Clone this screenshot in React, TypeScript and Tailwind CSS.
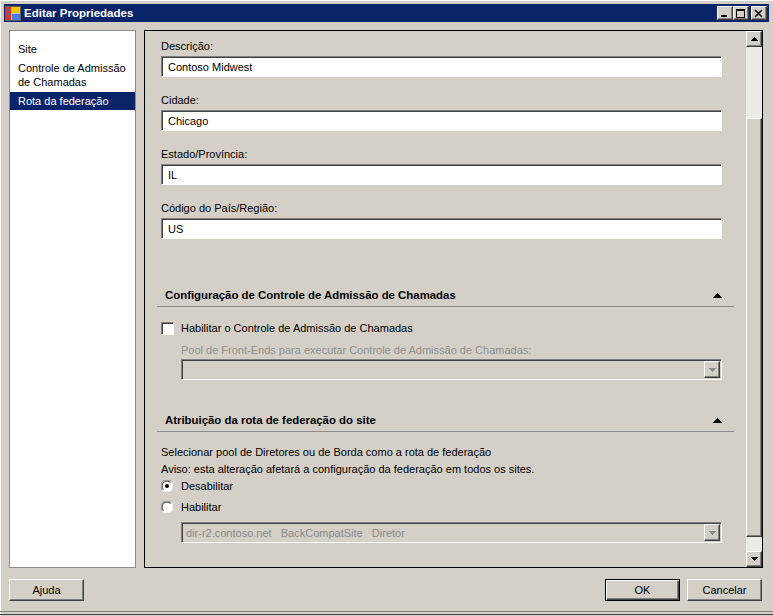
import React from "react";

const raised =
  "border border-t-white border-l-white border-b-[#404040] border-r-[#404040] shadow-[inset_-1px_-1px_0_#808080] bg-[#d4d0c8]";
const sunken =
  "border border-t-[#808080] border-l-[#808080] border-b-white border-r-white shadow-[inset_1px_1px_0_#404040]";

function Tri({ up = true, color = "#000" }: { up?: boolean; color?: string }) {
  const rows = [1, 3, 5, 7, 9];
  return (
    <svg width="9" height="5" shapeRendering="crispEdges">
      {rows.map((w, i) => (
        <rect key={i} x={(9 - w) / 2} y={up ? i : 4 - i} width={w} height="1" fill={color} />
      ))}
    </svg>
  );
}

function SmallTri({ up = true, color = "#000" }: { up?: boolean; color?: string }) {
  const rows = [1, 3, 5, 7];
  return (
    <svg width="7" height="4" shapeRendering="crispEdges">
      {rows.map((w, i) => (
        <rect key={i} x={(7 - w) / 2} y={up ? i : 3 - i} width={w} height="1" fill={color} />
      ))}
    </svg>
  );
}

function AppIcon() {
  return (
    <svg width="16" height="16" shapeRendering="crispEdges">
      <rect x="0.5" y="1.5" width="15" height="14" fill="#c0c0c0" stroke="#606060" />
      <rect x="1" y="2" width="5" height="13" fill="#d83a2a" />
      <rect x="2" y="4" width="3" height="2" fill="#3a6fd8" />
      <rect x="2" y="8" width="3" height="2" fill="#3a6fd8" />
      <rect x="7" y="2" width="8" height="6" fill="#f5c400" />
      <rect x="7" y="9" width="8" height="6" fill="#4a7fe0" />
    </svg>
  );
}

function TitleButton({ kind }: { kind: "min" | "max" | "close" }) {
  return (
    <div className={`w-[16px] h-[14px] flex items-center justify-center ${raised}`}>
      <svg width="10" height="9" shapeRendering="crispEdges">
        {kind === "min" && <rect x="1" y="6" width="6" height="2" fill="#000" />}
        {kind === "max" && (
          <g fill="#000">
            <rect x="0" y="0" width="9" height="2" />
            <rect x="0" y="0" width="1" height="9" />
            <rect x="8" y="0" width="1" height="9" />
            <rect x="0" y="8" width="9" height="1" />
          </g>
        )}
        {kind === "close" && (
          <path d="M1 1 L8 8 M8 1 L1 8" stroke="#000" strokeWidth="1.6" shapeRendering="auto" />
        )}
      </svg>
    </div>
  );
}

function Field({ label, value }: { label: string; value: string }) {
  return (
    <div className="flex flex-col">
      <div className="h-[14px] leading-[14px] mb-[3px]">{label}</div>
      <div className={`h-[21px] bg-white flex items-center pl-[6px] ${sunken}`}>{value}</div>
    </div>
  );
}

function SectionHeader({ title }: { title: string }) {
  return (
    <div className="ml-[-4px] mr-[-12px] pl-[8px] pr-[12px] pb-[3px] border-b border-[#8c8c8c] flex items-center justify-between">
      <div className="h-[16px] leading-[16px] font-bold text-[11.4px]">{title}</div>
      <Tri />
    </div>
  );
}

function DisabledCombo({ value }: { value?: string }) {
  return (
    <div className={`h-[21px] flex items-center justify-between bg-[#d4d0c8] ${sunken}`}>
      <span className="pl-[4px] text-[#8a8a8a] whitespace-pre">{value}</span>
      <div className={`w-[16px] h-[17px] mr-[1px] flex items-center justify-center ${raised}`}>
        <SmallTri up={false} color="#8a8a8a" />
      </div>
    </div>
  );
}

function Radio({ checked }: { checked?: boolean }) {
  return (
    <svg width="12" height="12">
      <circle cx="6" cy="6" r="5.5" fill="white" />
      <path d="M1.6 10.4 A5.5 5.5 0 0 1 10.4 1.6" stroke="#808080" strokeWidth="1" fill="none" />
      <path d="M2.5 9.5 A4.5 4.5 0 0 1 9.5 2.5" stroke="#404040" strokeWidth="1" fill="none" />
      <path d="M10.4 1.6 A5.5 5.5 0 0 1 1.6 10.4" stroke="#ffffff" strokeWidth="1" fill="none" />
      {checked && <circle cx="6" cy="6" r="2" fill="#000" />}
    </svg>
  );
}

function Button({ label, primary }: { label: string; primary?: boolean }) {
  return (
    <div
      className={`w-[75px] h-[22px] flex items-center justify-center bg-[#d4d0c8] ${
        primary
          ? "border border-black shadow-[inset_1px_1px_0_#fff,inset_-1px_-1px_0_#404040,inset_-2px_-2px_0_#808080]"
          : raised
      }`}
    >
      {label}
    </div>
  );
}

export default function App() {
  return (
    <div className="w-[773px] h-[616px] bg-[#d4d0c8] flex flex-col font-['Liberation_Sans',Arial,sans-serif] text-[11px] leading-[14px] text-black overflow-hidden shadow-[inset_1px_1px_0_#fff]">
      {/* title bar */}
      <div className="mt-[4px] mx-[4px] h-[18px] bg-[#0a246a] flex items-center pl-[1px] pr-[2px]">
        <AppIcon />
        <span className="ml-[3px] text-white font-bold text-[11.5px]">Editar Propriedades</span>
        <div className="ml-auto flex items-center">
          <TitleButton kind="min" />
          <TitleButton kind="max" />
          <div className="w-[2px]" />
          <TitleButton kind="close" />
        </div>
      </div>

      {/* body */}
      <div className="mt-[8px] ml-[9px] flex gap-[8px] h-[538px]">
        <div className="w-[127px] bg-white border border-[#8c8c8c] pt-[9px]">
          <div className="h-[18px] flex items-center pl-[8px]">Site</div>
          <div className="pl-[8px] py-[3px] leading-[14px]">
            Controle de Admissão
            <br />
            de Chamadas
          </div>
          <div className="h-[18px] flex items-center pl-[8px] bg-[#0a246a] text-white">Rota da federação</div>
        </div>

        <div className="w-[619px] border border-black flex">
          <div className="flex-1 pl-[16px] pr-[24px] pt-[8px] flex flex-col">
            <div className="flex flex-col gap-[16px]">
              <Field label="Descrição:" value="Contoso Midwest" />
              <Field label="Cidade:" value="Chicago" />
              <Field label="Estado/Província:" value="IL" />
              <Field label="Código do País/Região:" value="US" />
            </div>

            <div className="mt-[48px]">
              <SectionHeader title="Configuração de Controle de Admissão de Chamadas" />
            </div>
            <div className="mt-[14px] h-[14px] flex items-center gap-[7px]">
              <div className={`w-[13px] h-[13px] bg-white ${sunken}`} />
              <span>Habilitar o Controle de Admissão de Chamadas</span>
            </div>
            <div className="mt-[8px] pl-[20px] text-[#8f8f8f] h-[14px]">
              Pool de Front-Ends para executar Controle de Admissão de Chamadas:
            </div>
            <div className="mt-[2px] pl-[20px]">
              <DisabledCombo />
            </div>

            <div className="mt-[32px]">
              <SectionHeader title="Atribuição da rota de federação do site" />
            </div>
            <div className="mt-[13px] h-[14px]">Selecionar pool de Diretores ou de Borda como a rota de federação</div>
            <div className="mt-[3px] h-[14px]">Aviso: esta alteração afetará a configuração da federação em todos os sites.</div>
            <div className="mt-[3px] h-[14px] flex items-center gap-[8px]">
              <Radio checked />
              <span>Desabilitar</span>
            </div>
            <div className="mt-[7px] h-[14px] flex items-center gap-[8px]">
              <Radio />
              <span>Habilitar</span>
            </div>
            <div className="mt-[8px] pl-[20px]">
              <DisabledCombo value="dir-r2.contoso.net   BackCompatSite   Diretor" />
            </div>
          </div>

          {/* scrollbar */}
          <div className="w-[16px] flex flex-col">
            <div className={`h-[16px] flex items-center justify-center ${raised}`}>
              <SmallTri />
            </div>
            <div className="h-[71px] bg-[#ecebe7]" />
            <div className={`h-[419px] ${raised}`} />
            <div className="h-[14px] bg-[#ecebe7]" />
            <div className={`h-[16px] flex items-center justify-center ${raised}`}>
              <SmallTri up={false} />
            </div>
          </div>
        </div>
      </div>

      {/* buttons */}
      <div className="mt-[11px] ml-[9px] mr-[11px] flex items-center">
        <Button label="Ajuda" />
        <div className="ml-auto flex gap-[7px]">
          <Button label="OK" primary />
          <Button label="Cancelar" />
        </div>
      </div>

      <div className="mt-auto mb-[2px] h-[1px] bg-[#808080]" />
      <div className="mb-[1px] h-[1px] bg-[#404040]" />
    </div>
  );
}
